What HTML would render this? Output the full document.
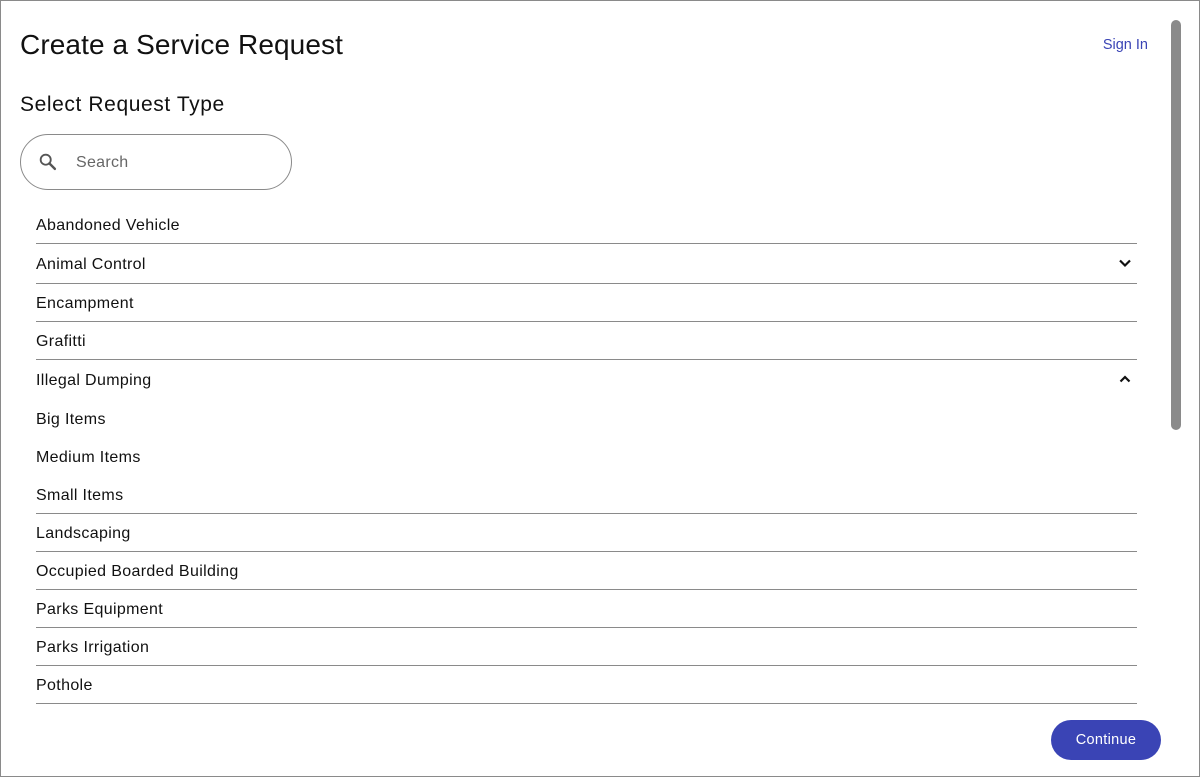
<!DOCTYPE html>
<html><head><style>
*{margin:0;padding:0;box-sizing:border-box}
body{width:1200px;height:777px;overflow:hidden;background:#fff;font-family:"Liberation Sans",sans-serif;color:#111;position:relative}
.frame{position:absolute;left:0;top:0;width:1200px;height:777px;border:1px solid #8a8a8a}
.abs{position:absolute;white-space:nowrap}
.row{position:absolute;left:36px;width:1101px;font-size:16px;line-height:20px;letter-spacing:0.35px}
.line{position:absolute;left:36px;width:1101px;height:1px;background:#8a8a8a}
</style></head><body>
<div class="frame"></div>
<div class="abs" style="left:20px;top:28px;font-size:28px;line-height:34px;letter-spacing:0.1px">Create a Service Request</div>
<div class="abs" style="right:52px;top:36px;font-size:14.5px;line-height:18px;color:#3a44b5">Sign In</div>
<div class="abs" style="left:20px;top:92px;font-size:21px;line-height:26px;letter-spacing:0.6px">Select Request Type</div>
<div class="abs" style="left:20px;top:134px;width:272px;height:56px;border:1px solid #8a8a8a;border-radius:28px"></div>
<svg class="abs" style="left:37px;top:151px" width="22" height="22" viewBox="0 0 24 24"><circle cx="9.5" cy="9.5" r="5.5" fill="none" stroke="#555" stroke-width="2"/><path d="M13.5 13.5L19.5 19.5" stroke="#555" stroke-width="2.6" stroke-linecap="round"/></svg>
<div class="abs" style="left:76px;top:153px;font-size:16px;line-height:20px;color:#666;letter-spacing:0.3px">Search</div>
<div class="abs" style="left:1171px;top:20px;width:10px;height:410px;background:#8a8a8a;border-radius:5px"></div>

<div class="row" style="top:216px">Abandoned Vehicle</div><div class="line" style="top:243px"></div>
<div class="row" style="top:255px">Animal Control</div><div class="line" style="top:283px"></div>
<div class="row" style="top:294px">Encampment</div><div class="line" style="top:321px"></div>
<div class="row" style="top:332px">Grafitti</div><div class="line" style="top:359px"></div>
<div class="row" style="top:371px">Illegal Dumping</div>
<div class="row" style="top:410px">Big Items</div>
<div class="row" style="top:448px">Medium Items</div>
<div class="row" style="top:486px">Small Items</div><div class="line" style="top:513px"></div>
<div class="row" style="top:524px">Landscaping</div><div class="line" style="top:551px"></div>
<div class="row" style="top:562px">Occupied Boarded Building</div><div class="line" style="top:589px"></div>
<div class="row" style="top:600px">Parks Equipment</div><div class="line" style="top:627px"></div>
<div class="row" style="top:638px">Parks Irrigation</div><div class="line" style="top:665px"></div>
<div class="row" style="top:676px">Pothole</div><div class="line" style="top:703px"></div>

<svg class="abs" style="left:1118px;top:257px" width="14" height="12" viewBox="0 0 14 12"><path d="M2 3.5L7 8.5L12 3.5" fill="none" stroke="#111" stroke-width="2.2"/></svg>
<svg class="abs" style="left:1118px;top:373px" width="14" height="12" viewBox="0 0 14 12"><path d="M2.5 8.5L7 4L11.5 8.5" fill="none" stroke="#111" stroke-width="2.2"/></svg>

<div class="abs" style="left:1051px;top:720px;width:110px;height:40px;background:#3a44b5;border-radius:20px;color:#fff;font-size:14.5px;line-height:41px;text-align:center;letter-spacing:0.3px">Continue</div>
</body></html>
